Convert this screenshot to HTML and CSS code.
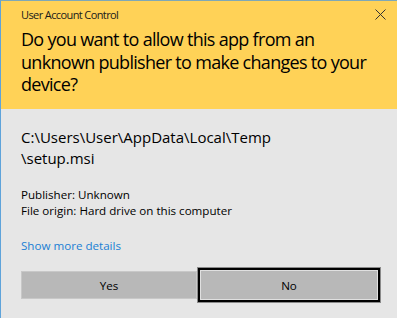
FILE: index.html
```html
<!DOCTYPE html>
<html>
<head>
<meta charset="utf-8">
<link rel="stylesheet" href="styles.css">
</head>
<body>
<div class="window">
  <div class="header">
    <div class="titlebar">
      <span class="title">User Account Control</span>
      <svg class="close" width="11" height="11" viewBox="0 0 11 11"><path d="M0.5 0.5 L10.5 10.5 M10.5 0.5 L0.5 10.5" stroke="#333" stroke-width="1"/></svg>
    </div>
    <h1 class="question">Do you want to allow this app from an unknown publisher to make changes to your device?</h1>
  </div>
  <div class="content">
    <p class="path">C:\Users\User\AppData\Local\Temp<br>\setup.msi</p>
    <div class="meta">
      <div>Publisher: Unknown</div>
      <div>File origin: Hard drive on this computer</div>
    </div>
    <a class="details" href="#">Show more details</a>
    <div class="buttons">
      <button class="btn yes">Yes</button>
      <button class="btn no">No</button>
    </div>
  </div>
</div>
</body>
</html>
```
FILE: styles.css
```css
html, body {
  margin: 0;
  padding: 0;
  background: #e6e6e6;
}
body {
  width: 397px;
  height: 318px;
  overflow: hidden;
  font-family: "Open Sans", "Noto Sans", sans-serif;
  color: #000;
}
.window {
  height: 317px;
  border-top: 1px solid #7fa8b6;
  border-left: 1px solid #5ea3da;
  background: #e6e6e6;
}
.header {
  background: #ffd257;
  height: 108px;
  padding-left: 20px;
  box-sizing: border-box;
}
.titlebar {
  display: flex;
  justify-content: space-between;
  align-items: center;
  height: 27px;
  padding-right: 11px;
}
.title {
  font-size: 11px;
  letter-spacing: -0.6px;
  color: #1a1a1a;
}
.close {
  display: block;
}
.question {
  margin: 0;
  font-weight: normal;
  font-size: 18px;
  letter-spacing: -0.7px;
  line-height: 22.5px;
  width: 360px;
}
.content {
  padding: 18px 0 0 20px;
}
.path {
  margin: 0;
  font-size: 15px;
  line-height: 21px;
}
.meta {
  margin-top: 18px;
  font-size: 11.6px;
  line-height: 16px;
}
.details {
  display: block;
  margin-top: 19px;
  font-size: 11.6px;
  color: #1a7fd4;
  text-decoration: none;
}
.buttons {
  display: flex;
  align-items: center;
  margin-top: 15px;
  gap: 1px;
}
.btn {
  font-family: inherit;
  font-size: 11.6px;
  color: #000;
  background: #b8b8b8;
  padding: 0;
}
.yes {
  width: 176px;
  height: 28px;
  border: 1px solid #c8c8c8;
}
.no {
  width: 182px;
  height: 34px;
  border: 2px solid #000;
  box-shadow: 0 0 0 1px #8a8a8a, inset 0 0 0 1px #e0e0e0;
}
```
